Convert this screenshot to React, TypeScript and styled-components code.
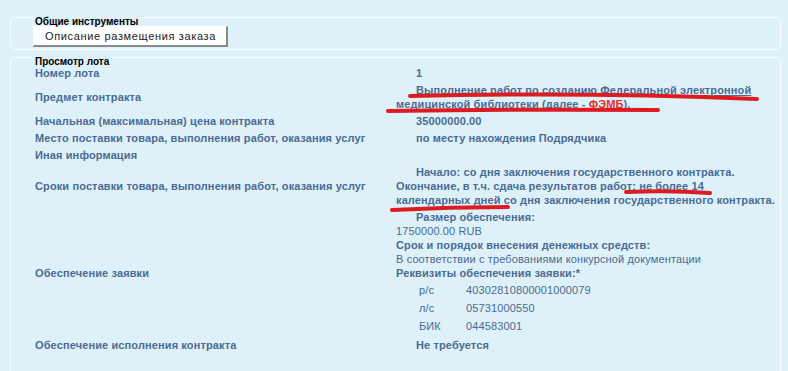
import styled, { createGlobalStyle } from "styled-components";
import { ReactNode } from "react";

const GlobalStyle = createGlobalStyle`
   html, body {
      margin: 0;
      background-color: #def1f8;
   }

   body {
      font-family: "Liberation Sans", Arial, sans-serif;
   }
`;

interface Row {
   label: string;
   value: ReactNode;
}

const bankDetails = [
   { code: "р/с", number: "40302810800001000079" },
   { code: "л/с", number: "05731000550" },
   { code: "БИК", number: "044583001" },
];

const buildRows = (): Row[] => [
   { label: "Номер лота", value: <Value>1</Value> },
   {
      label: "Предмет контракта",
      value: (
         <Value>
            <Link>
               Выполнение работ по созданию Федеральной электронной
               медицинской библиотеки (далее - <Accent>ФЭМБ</Accent>).
            </Link>
         </Value>
      ),
   },
   {
      label: "Начальная (максимальная) цена контракта",
      value: <Value>35000000.00</Value>,
   },
   {
      label: "Место поставки товара, выполнения работ, оказания услуг",
      value: <Value>по месту нахождения Подрядчика</Value>,
   },
   { label: "Иная информация", value: <Value /> },
   {
      label: "Сроки поставки товара, выполнения работ, оказания услуг",
      value: (
         <Value>
            <Line $strong $indent>
               Начало: со дня заключения государственного контракта.
            </Line>
            <Line $strong>
               Окончание, в т.ч. сдача результатов работ: не более 14
               <br />
               календарных дней со дня заключения государственного
               контракта.
            </Line>
         </Value>
      ),
   },
   {
      label: "Обеспечение заявки",
      value: (
         <Value>
            <Line $strong $indent>
               Размер обеспечения:
            </Line>
            <Line>1750000.00 RUB</Line>
            <Line $strong>Срок и порядок внесения денежных средств:</Line>
            <Line>В соответствии с требованиями конкурсной документации</Line>
            <Line $strong>Реквизиты обеспечения заявки:*</Line>
            <BankTable>
               {bankDetails.map((item) => (
                  <BankRow key={item.code}>
                     <span>{item.code}</span>
                     <span>{item.number}</span>
                  </BankRow>
               ))}
            </BankTable>
         </Value>
      ),
   },
   {
      label: "Обеспечение исполнения контракта",
      value: <Value>Не требуется</Value>,
   },
];

export default function App() {
   const rows = buildRows();

   return (
      <>
         <GlobalStyle />
         <Page>
            <Fieldset>
               <Legend>Общие инструменты</Legend>
               <ToolButton type="button">Описание размещения заказа</ToolButton>
            </Fieldset>

            <Fieldset $open>
               <Legend>Просмотр лота</Legend>
               <InfoList>
                  {rows.map((row) => (
                     <InfoRow key={row.label}>
                        <Label>{row.label}</Label>
                        {row.value}
                     </InfoRow>
                  ))}
               </InfoList>
            </Fieldset>

            <Marks width="788" height="371" viewBox="0 0 788 371">
               <path d="M410 96 Q585 92 757 99" />
               <path d="M388 111 Q520 109 658 110" />
               <path d="M626 192 Q670 190 710 193" />
               <path d="M392 210 Q450 207 508 207" />
            </Marks>
         </Page>
      </>
   );
}

const Page = styled.div`
   position: relative;
   padding: 14.5px 7px 0 10px;
   min-height: 371px;
   box-sizing: border-box;
   overflow: hidden;
`;

const Fieldset = styled.fieldset<{ $open?: boolean }>`
   margin: ${({ $open }) => ($open ? "5px 0 0" : "0")};
   padding: ${({ $open }) => ($open ? "5px 2px 30px 22px" : "6px 2px 2px 22px")};
   border: 1px solid #fbfeff;
   border-radius: 5px;
   min-width: 0;
`;

const Legend = styled.legend`
   padding: 0 2px;
   height: 5px;
   line-height: 13px;
   font-size: 10px;
   font-weight: 700;
   color: #000;
`;

const ToolButton = styled.button`
   display: block;
   height: 21px;
   padding: 0 10px 0 11px;
   background-color: #ffffff;
   border: 1px solid #fdfdfd;
   border-right: 2px solid #8a8a8a;
   border-bottom: 2px solid #8a8a8a;
   font-family: "Liberation Sans", Arial, sans-serif;
   font-size: 11px;
   letter-spacing: 0.65px;
   color: #222;
   cursor: pointer;
`;

const InfoList = styled.div`
   display: flex;
   flex-direction: column;
   margin-left: 2px;
`;

const InfoRow = styled.div`
   display: grid;
   grid-template-columns: 361px 1fr;
   align-items: center;
   padding: 1.5px 0;
   min-height: 14px;
`;

const Label = styled.div`
   font-size: 11px;
   font-weight: 700;
   line-height: 14px;
   letter-spacing: 0.12px;
   color: #4a6b93;
`;

const Value = styled.div`
   font-size: 11px;
   font-weight: 700;
   line-height: 14px;
   letter-spacing: 0.12px;
   color: #4a6b93;
   text-indent: 20px;
   min-height: 14px;
`;

const Line = styled.div<{ $strong?: boolean; $indent?: boolean }>`
   font-weight: ${({ $strong }) => ($strong ? 700 : 400)};
   text-indent: ${({ $indent }) => ($indent ? "20px" : "0")};
`;

const Link = styled.a`
   color: #4a6b93;
   text-decoration: underline;
`;

const Accent = styled.span`
   color: #e0322c;
`;

const BankTable = styled.div`
   display: flex;
   flex-direction: column;
   padding: 1px 0 0 23px;
   text-indent: 0;
`;

const BankRow = styled.div`
   display: grid;
   grid-template-columns: 47px 1fr;
   align-items: center;
   height: 18px;
   font-weight: 400;
   font-size: 11px;
`;

const Marks = styled.svg`
   position: absolute;
   top: 0;
   left: 0;
   pointer-events: none;

   path {
      fill: none;
      stroke: #dc1c22;
      stroke-width: 4;
      stroke-linecap: round;
   }
`;
